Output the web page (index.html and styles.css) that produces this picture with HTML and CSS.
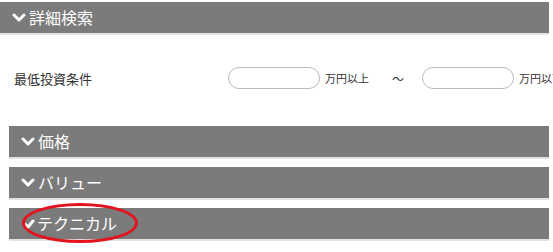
FILE: index.html
```html
<!DOCTYPE html>
<html lang="ja">
<head>
  <meta charset="UTF-8" />
  <title>詳細検索</title>
  <link rel="stylesheet" href="styles.css">
</head>
<body>

  <!-- 詳細検索 -->
  <div class="panel">
    <h2 class="panel-head">
      <svg class="chev" width="14" height="10" viewBox="0 0 14 10"><polyline points="2,2 7,7 12,2" /></svg>
      詳細検索
    </h2>

    <div class="panel-body">
      <div class="cond-row">
        <span class="cond-label">最低投資条件</span>
        <input type="text" class="cond-input">
        <span class="unit">万円以上</span>
        <span class="tilde">～</span>
        <input type="text" class="cond-input">
        <span class="unit">万円以下</span>
      </div>

      <h3 class="sub-head">
        <svg class="chev" width="14" height="10" viewBox="0 0 14 10"><polyline points="2,2 7,7 12,2" /></svg>
        価格
      </h3>
      <h3 class="sub-head">
        <svg class="chev" width="14" height="10" viewBox="0 0 14 10"><polyline points="2,2 7,7 12,2" /></svg>
        バリュー
      </h3>
      <h3 class="sub-head marked">
        <svg class="check" width="12" height="10" viewBox="0 0 12 10"><polyline points="2,5 5,8 10,2" /></svg>
        テクニカル
        <span class="circle"></span>
      </h3>
    </div>
  </div>

</body>
</html>
```

FILE: styles.css
```css
* {
  margin: 0;
  padding: 0;
  box-sizing: border-box;
}

body {
  width: 553px;
  height: 252px;
  overflow: hidden;
  background: #fff;
  font-family: "Noto Sans CJK JP", "Noto Sans", sans-serif;
  color: #333;
}

.panel {
  padding-top: 2px;
  width: 549px;
}

.panel-head,
.sub-head {
  display: flex;
  align-items: center;
  height: 33px;
  background: #7b7b7b;
  border-bottom: 2px solid #e2e2e2;
  color: #fff;
  font-size: 16px;
  font-weight: normal;
  line-height: 31px;
}

.panel-head {
  padding-left: 12px;
}

.chev {
  margin-right: 3px;
}

.chev polyline,
.check polyline {
  fill: none;
  stroke: #fff;
  stroke-width: 3;
  stroke-linecap: round;
  stroke-linejoin: round;
}

.panel-body {
  padding-left: 9px;
}

.cond-row {
  display: flex;
  align-items: center;
  padding: 32px 0 29px 5px;
  white-space: nowrap;
}

.cond-row > * {
  flex-shrink: 0;
}

.cond-label {
  width: 214px;
  font-size: 13px;
}

.cond-input {
  width: 92px;
  height: 22px;
  border: 1px solid #bbb;
  border-radius: 11px;
  background: #fff;
}

.unit {
  margin-left: 5px;
  font-size: 11px;
}

.tilde {
  margin: 0 18px 0 23px;
  font-size: 12px;
}

.sub-head {
  margin-top: 8px;
  padding-left: 12px;
}

.marked {
  position: relative;
}

.check {
  margin: 0 2px 0 2px;
}

.circle {
  position: absolute;
  left: 13px;
  top: -5px;
  width: 116px;
  height: 40px;
  border: 3px solid #e3121b;
  border-radius: 50%;
}
```
